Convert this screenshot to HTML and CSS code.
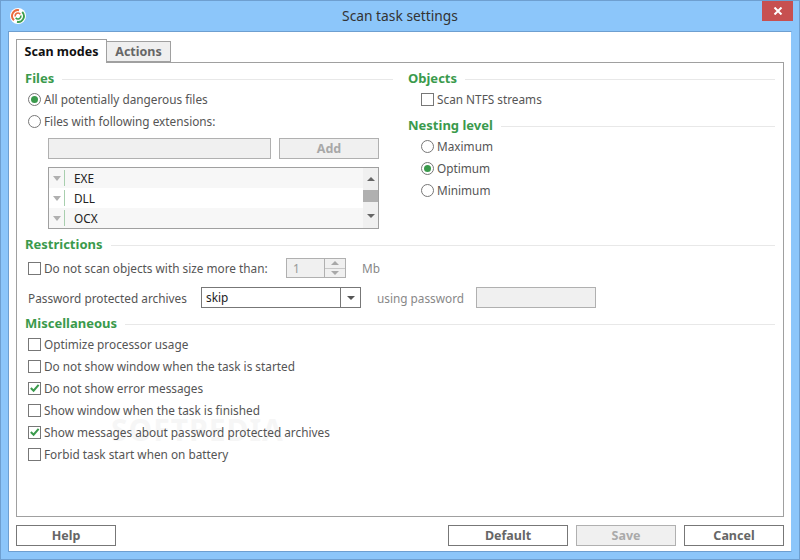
FILE: index.html
```html
<!DOCTYPE html>
<html lang="en">
<head>
<meta charset="utf-8">
<title>Scan task settings</title>
<link rel="stylesheet" href="styles.css">
</head>
<body>
<div class="window">
  <header class="titlebar">
    <svg class="logo" width="16" height="16" viewBox="0 0 16 16">
      <circle cx="8" cy="8" r="8" fill="#fff"/>
      <path d="M9 2.2A5.8 5.8 0 0 0 4 12.2" fill="none" stroke="#ea6a3c" stroke-width="1.9"/>
      <path d="M7 13.8A5.8 5.8 0 0 0 12.2 4" fill="none" stroke="#3c9e4e" stroke-width="1.9"/>
      <path d="M5.3 8.5A2.8 2.8 0 0 1 10.3 6.2" fill="none" stroke="#ea6a3c" stroke-width="1.5"/>
      <path d="M10.7 7.5A2.8 2.8 0 0 1 5.7 9.8" fill="none" stroke="#3c9e4e" stroke-width="1.5"/>
    </svg>
    <div class="title">Scan task settings</div>
    <div class="close">
      <svg width="10" height="8" viewBox="0 0 10 8"><path d="M1.5 0.5 8.5 7.5M8.5 0.5 1.5 7.5" fill="none" stroke="#fff" stroke-width="2"/></svg>
    </div>
  </header>
  <main class="client">
    <nav class="tabs">
      <div class="tab active">Scan modes</div>
      <div class="tab">Actions</div>
    </nav>
    <section class="panel">
      <div class="top">
        <div class="col-left">
          <div class="head"><span>Files</span></div>
          <div class="opts">
            <label class="opt"><i class="radio on"></i>All potentially dangerous files</label>
            <label class="opt"><i class="radio"></i>Files with following extensions:</label>
          </div>
          <div class="ext">
            <div class="add-row">
              <div class="field grow"></div>
              <div class="btn-add">Add</div>
            </div>
            <div class="list">
              <div class="rows">
                <div class="row alt"><i class="tri"></i><b class="sep"></b>EXE</div>
                <div class="row"><i class="tri"></i><b class="sep"></b>DLL</div>
                <div class="row alt"><i class="tri"></i><b class="sep"></b>OCX</div>
              </div>
              <div class="scroll">
                <i class="up"></i>
                <i class="thumb"></i>
                <i class="down"></i>
              </div>
            </div>
          </div>
        </div>
        <div class="col-right">
          <div class="head"><span>Objects</span></div>
          <div class="opts indent">
            <label class="opt"><i class="check"></i>Scan NTFS streams</label>
          </div>
          <div class="head head-nest"><span>Nesting level</span></div>
          <div class="opts indent">
            <label class="opt"><i class="radio"></i>Maximum</label>
            <label class="opt"><i class="radio on"></i>Optimum</label>
            <label class="opt"><i class="radio"></i>Minimum</label>
          </div>
        </div>
      </div>
      <div class="head"><span>Restrictions</span></div>
      <div class="size-row">
        <label class="opt size-label"><i class="check"></i>Do not scan objects with size more than:</label>
        <div class="spin">
          <span class="spin-val">1</span>
          <div class="spin-btns"><span class="spin-half"><i class="up"></i></span><span class="spin-half"><i class="down"></i></span></div>
        </div>
        <span class="muted mb">Mb</span>
      </div>
      <div class="pwd-row">
        <span class="pwd-label">Password protected archives</span>
        <div class="select"><span class="sel-val">skip</span><span class="sel-btn"><i class="down dark"></i></span></div>
        <span class="muted using">using password</span>
        <div class="field pwd-field"></div>
      </div>
      <div class="head head-misc"><span>Miscellaneous</span></div>
      <div class="opts misc">
        <label class="opt"><i class="check"></i>Optimize processor usage</label>
        <label class="opt"><i class="check"></i>Do not show window when the task is started</label>
        <label class="opt"><i class="check"><svg width="12" height="12" viewBox="0 0 12 12"><path d="M2 6 5 9 10.5 2.5" fill="none" stroke="#3a9a4c" stroke-width="2.2"/></svg></i>Do not show error messages</label>
        <label class="opt"><i class="check"></i>Show window when the task is finished</label>
        <label class="opt"><i class="check"><svg width="12" height="12" viewBox="0 0 12 12"><path d="M2 6 5 9 10.5 2.5" fill="none" stroke="#3a9a4c" stroke-width="2.2"/></svg></i>Show messages about password protected archives</label>
        <label class="opt"><i class="check"></i>Forbid task start when on battery</label>
      </div>
    </section>
    <footer class="buttons">
      <div class="btn btn-help">Help</div>
      <div class="spacer"></div>
      <div class="btn btn-default">Default</div>
      <div class="btn disabled">Save</div>
      <div class="btn">Cancel</div>
    </footer>
    <div class="watermark">SOFTPEDIA</div>
  </main>
</div>
</body>
</html>
```
FILE: styles.css
```css
* { box-sizing: border-box; }
html, body { margin: 0; padding: 0; }
body { width: 800px; height: 560px; overflow: hidden; font-family: "Noto Sans", "Liberation Sans", sans-serif; font-size: 11.8px; color: #555; }
i { display: block; font-style: normal; }
.window { width: 800px; height: 560px; background: #8cc6fa; border: 1px solid #6e9fd0; display: flex; flex-direction: column; }
.titlebar { height: 30px; flex: none; display: flex; align-items: flex-start; position: relative; }
.logo { margin: 7px 0 0 9px; }
.title { position: absolute; left: 0; right: 0; top: 6px; text-align: center; font-size: 13.8px; line-height: 18px; color: #333; }
.close { margin-left: auto; margin-right: 6px; width: 31px; height: 20px; background: #c75050; display: flex; align-items: center; justify-content: center; }
.client { flex: 1; margin: 0 7px 7px; background: #fff; border: 1px solid #6e9fd0; border-right-color: #8cc6fa; padding: 7px 7px 0; position: relative; display: flex; flex-direction: column; }
.tabs { height: 23px; flex: none; display: flex; align-items: flex-end; position: relative; z-index: 1; }
.tab { height: 21px; width: 64px; background: #efefef; border: 1px solid #a0a0a0; border-left: 0; font-weight: 700; color: #666; text-align: center; line-height: 20px; font-size: 12.5px; }
.tab.active { height: 24px; width: 91px; margin-bottom: -1px; background: #fff; border-left: 1px solid #a0a0a0; border-bottom: 0; color: #111; line-height: 24px; }
.panel { height: 455px; flex: none; border: 1px solid #a0a0a0; padding: 6px 8px 0; margin-bottom: 8px; }
.top { display: flex; gap: 15px; height: 166px; }
.col-left { width: 368px; flex: none; }
.col-right { flex: 1; }
.head { height: 18px; display: flex; align-items: center; gap: 8px; font-weight: 700; font-size: 13px; color: #3a9a4c; line-height: 18px; }
.head::after { content: ""; flex: 1; height: 1px; background: #e8e8e8; margin-top: 2px; }
.head-nest { margin-top: 6px; }
.head-misc { margin-top: 6px; }
.opts { display: flex; flex-direction: column; padding-left: 3px; margin-top: 1px; }
.indent { padding-left: 13px; }
.opt { height: 22px; display: flex; align-items: center; gap: 3px; white-space: nowrap; }
.radio { width: 13px; height: 13px; border: 1px solid #777; border-radius: 50%; background: #fff; flex: none; display: flex; align-items: center; justify-content: center; }
.radio.on::after { content: ""; width: 7px; height: 7px; border-radius: 50%; background: #3a9a4c; }
.check { width: 13px; height: 13px; border: 1px solid #777; background: #fff; flex: none; display: flex; align-items: center; justify-content: center; }
.ext { padding: 6px 14px 0 23px; }
.add-row { display: flex; gap: 8px; height: 21px; }
.field { background: #f0f0f0; border: 1px solid #b0b0b0; }
.grow { flex: 1; }
.btn-add { width: 100px; background: #f0f0f0; border: 1px solid #b0b0b0; color: #a8a8a8; font-weight: 700; font-size: 12.5px; text-align: center; line-height: 19px; }
.list { margin-top: 8px; height: 62px; border: 1px solid #a0a0a0; display: flex; color: #222; }
.rows { flex: 1; }
.row { height: 20px; display: flex; align-items: center; }
.row.alt { background: #f7f7f7; }
.tri { width: 0; height: 0; margin-left: 4px; border-style: solid; border-width: 5px 4px 0; border-color: #b0b0b0 transparent transparent; }
.sep { width: 1px; height: 16px; background: #a8cfae; margin: 0 9px 0 3px; }
.scroll { width: 15px; background: #f0f0f0; display: flex; flex-direction: column; align-items: center; }
.up { width: 0; height: 0; border-style: solid; border-width: 0 4px 4px; border-color: transparent transparent #666; }
.down { width: 0; height: 0; border-style: solid; border-width: 4px 4px 0; border-color: #666 transparent transparent; }
.scroll .up { margin-top: 9px; }
.scroll .thumb { width: 15px; height: 12px; margin-top: 9px; background: #b0b0b0; }
.scroll .down { margin-top: 12px; }
.size-row { display: flex; align-items: center; height: 20px; margin-top: 5px; padding-left: 3px; }
.size-label { width: 258px; }
.spin { width: 60px; height: 20px; border: 1px solid #b0b0b0; background: #f0f0f0; display: flex; color: #999; }
.spin-val { flex: 1; padding-left: 6px; line-height: 18px; }
.spin-btns { width: 21px; border-left: 1px solid #b0b0b0; display: flex; flex-direction: column; }
.spin-half { flex: 1; display: flex; align-items: center; justify-content: center; }
.spin-half + .spin-half { border-top: 1px solid #c8c8c8; }
.spin-half .up { border-bottom-color: #a8a8a8; }
.spin-half .down { border-top-color: #a8a8a8; }
.muted { color: #888; }
.mb { margin-left: 16px; }
.pwd-row { display: flex; align-items: center; height: 21px; margin-top: 9px; padding-left: 3px; }
.pwd-label { width: 173px; white-space: nowrap; }
.select { width: 160px; height: 21px; border: 1px solid #777; display: flex; color: #222; }
.sel-val { flex: 1; padding-left: 4px; line-height: 19px; }
.sel-btn { width: 20px; border-left: 1px solid #777; display: flex; align-items: center; justify-content: center; }
.down.dark { border-top-color: #555; }
.using { margin-left: 16px; width: 99px; white-space: nowrap; }
.pwd-field { width: 120px; height: 21px; }
.misc { margin-top: 1px; }
.buttons { display: flex; gap: 8px; height: 21px; flex: none; }
.btn { width: 100px; height: 21px; border: 1px solid #777; background: #fff; font-weight: 700; font-size: 12.5px; line-height: 19px; text-align: center; color: #666; }
.btn-default { width: 120px; }
.spacer { flex: 1; }
.disabled { background: #f0f0f0; border-color: #b0b0b0; color: #aaa; }
.watermark { position: absolute; left: 102px; top: 382px; font-size: 30px; font-weight: 700; letter-spacing: 1px; color: #000; opacity: 0.03; line-height: 32px; pointer-events: none; }
```
